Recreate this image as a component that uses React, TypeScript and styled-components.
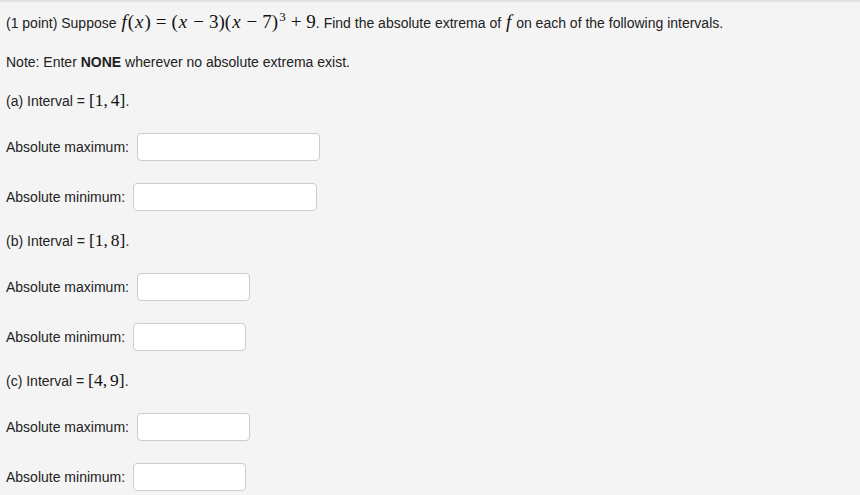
import React from 'react';
import styled, { createGlobalStyle } from 'styled-components';

const GlobalStyle = createGlobalStyle`
  html, body {
    margin: 0;
    padding: 0;
    background: #f4f4f4;
  }
`;

const Page = styled.div`
  width: 860px;
  height: 495px;
  box-sizing: border-box;
  background: #f4f4f4;
  border-top: 2px solid #e2e2e2;
  padding: 10px 6px 0 6px;
  font-family: 'Liberation Sans', Arial, sans-serif;
  font-size: 14px;
  color: #222;
  display: flex;
  flex-direction: column;
  overflow: hidden;
`;

const Para = styled.div<{ $top?: number }>`
  line-height: 20px;
  height: 20px;
  margin-top: ${(p) => p.$top ?? 0}px;
  white-space: nowrap;
`;

const Math = styled.span<{ $size?: number }>`
  font-family: 'Liberation Serif', 'DejaVu Serif', serif;
  font-size: ${(p) => p.$size ?? 17.5}px;
  line-height: 1;
  color: #111;
  white-space: nowrap;
`;

const Var = styled.i`
  font-style: italic;
  padding: 0 1px;
`;

const Op = styled.span`
  padding: 0 5px;
`;

const Sup = styled.sup`
  font-size: 13px;
  vertical-align: 7px;
  line-height: 0;
  padding-left: 1px;
`;

const Row = styled.div<{ $top: number }>`
  display: flex;
  align-items: center;
  height: 28px;
  margin-top: ${(p) => p.$top}px;
`;

const Label = styled.span`
  margin-right: 8px;
`;

const Field = styled.input<{ $w: number }>`
  box-sizing: border-box;
  width: ${(p) => p.$w}px;
  height: 28px;
  border: 1px solid #cccccc;
  border-radius: 4px;
  background: #fff;
  outline: none;
  padding: 4px 6px;
  font-family: inherit;
  font-size: 14px;
`;

const Interval = ({ a, b }: { a: number; b: number }) => (
  <Math>
    [{a},<span style={{ paddingLeft: 3 }}>{b}</span>]
  </Math>
);

const Part = ({
  tag,
  a,
  b,
  w1,
  w2,
  top,
}: {
  tag: string;
  a: number;
  b: number;
  w1: number;
  w2: number;
  top: number;
}) => (
  <>
    <Para $top={top}>
      ({tag}) Interval = <Interval a={a} b={b} />.
    </Para>
    <Row $top={22}>
      <Label>Absolute maximum:</Label>
      <Field $w={w1} />
    </Row>
    <Row $top={22}>
      <Label>Absolute minimum:</Label>
      <Field $w={w2} />
    </Row>
  </>
);

export default function App() {
  return (
    <>
      <GlobalStyle />
      <Page>
        <Para>
          (1 point) Suppose{' '}
          <Math $size={19}>
            <Var>f</Var>(<Var>x</Var>)<Op>=</Op>(<Var>x</Var>
            <Op>−</Op>3)(<Var>x</Var>
            <Op>−</Op>7)<Sup>3</Sup>
            <Op>+</Op>9
          </Math>
          . Find the absolute extrema of{' '}
          <Math $size={19}>
            <Var>f</Var>
          </Math>{' '}
          on each of the following intervals.
        </Para>
        <Para $top={20}>
          Note: Enter <b>NONE</b> wherever no absolute extrema exist.
        </Para>
        <Part tag="a" a={1} b={4} w1={183} w2={184} top={19} />
        <Part tag="b" a={1} b={8} w1={113} w2={113} top={20} />
        <Part tag="c" a={4} b={9} w1={113} w2={113} top={20} />
      </Page>
    </>
  );
}
